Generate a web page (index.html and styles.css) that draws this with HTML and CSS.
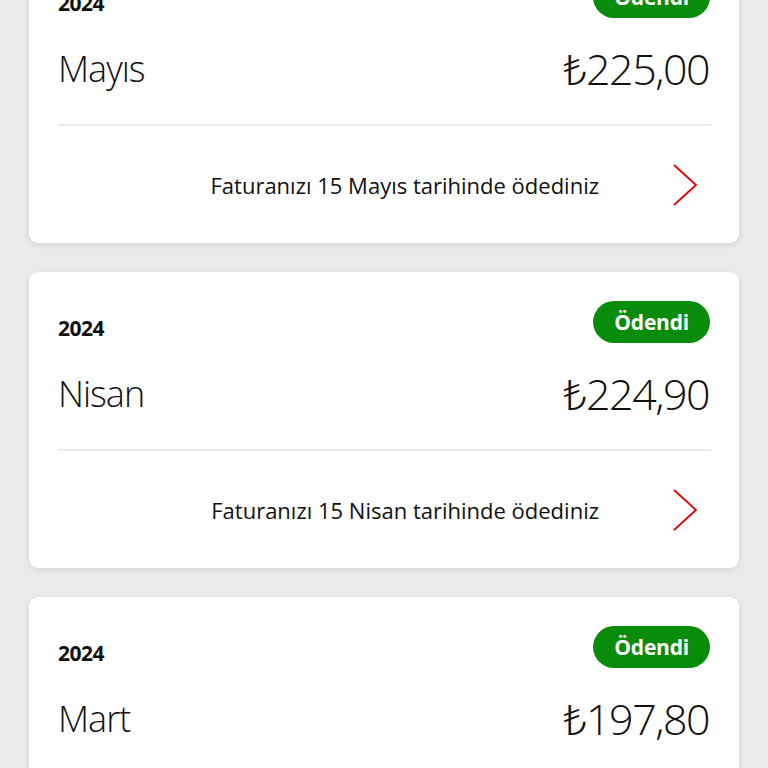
FILE: index.html
```html
<!DOCTYPE html>
<html lang="tr">
<head>
<meta charset="utf-8">
<link rel="stylesheet" href="styles.css">
</head>
<body>
<div class="list">
  <div class="card">
    <div class="head"><span class="year">2024</span><span class="badge">Ödendi</span></div>
    <div class="main"><span class="month">Mayıs</span><span class="amount">₺225,00</span></div>
    <div class="foot"><span class="note">Faturanızı 15 Mayıs tarihinde ödediniz</span>
      <svg class="chev" width="26" height="42" viewBox="0 0 26 42"><path d="M2 1 L24 21 L2 41" fill="none" stroke="#e00000" stroke-width="1.8"/></svg></div>
  </div>
  <div class="card">
    <div class="head"><span class="year">2024</span><span class="badge">Ödendi</span></div>
    <div class="main"><span class="month">Nisan</span><span class="amount">₺224,90</span></div>
    <div class="foot"><span class="note">Faturanızı 15 Nisan tarihinde ödediniz</span>
      <svg class="chev" width="26" height="42" viewBox="0 0 26 42"><path d="M2 1 L24 21 L2 41" fill="none" stroke="#e00000" stroke-width="1.8"/></svg></div>
  </div>
  <div class="card">
    <div class="head"><span class="year">2024</span><span class="badge">Ödendi</span></div>
    <div class="main"><span class="month">Mart</span><span class="amount">₺197,80</span></div>
    <div class="foot"><span class="note">Faturanızı 15 Mart tarihinde ödediniz</span>
      <svg class="chev" width="26" height="42" viewBox="0 0 26 42"><path d="M2 1 L24 21 L2 41" fill="none" stroke="#e00000" stroke-width="1.8"/></svg></div>
  </div>
</div>
</body>
</html>
```
FILE: styles.css
```css
html, body {
  margin: 0;
  padding: 0;
  background: #ebebeb;
  font-family: "Open Sans", "Noto Sans", sans-serif;
  color: #111;
  height: 768px;
  overflow: hidden;
}
.list {
  margin-top: -53px;
  padding: 0 29px;
  display: flex;
  flex-direction: column;
  gap: 29px;
}
.card {
  background: #fff;
  border-radius: 9px;
  box-shadow: 0 2px 6px rgba(0,0,0,0.10);
  padding: 29px 28px 0 29px;
  height: 296px;
  box-sizing: border-box;
  flex-shrink: 0;
}
.head {
  display: flex;
  justify-content: space-between;
  align-items: flex-end;
  height: 42px;
}
.year {
  font-size: 21px;
  font-weight: 700;
  line-height: 1;
  margin-bottom: 4px;
  letter-spacing: -0.5px;
}
.badge {
  background: #098b0c;
  color: #fff;
  font-weight: 700;
  font-size: 21px;
  height: 42px;
  line-height: 42px;
  padding: 0 21px;
  border-radius: 21px;
  letter-spacing: -0.2px;
  margin-right: 1px;
}
.main {
  display: flex;
  justify-content: space-between;
  align-items: center;
  height: 60px;
  margin-top: 20px;
  border-bottom: 2px solid #ebebeb;
  padding-bottom: 26px;
}
.month {
  font-size: 36px;
  font-weight: 300;
  letter-spacing: -1px;
}
.amount {
  font-size: 43px;
  font-weight: 300;
  letter-spacing: -1.5px;
  margin-right: 2px;
}
.foot {
  display: flex;
  justify-content: flex-end;
  align-items: center;
  height: 117px;
  padding-right: 13px;
}
.note {
  font-size: 22px;
  margin-right: 73px;
}
.chev { display: block; }
```
